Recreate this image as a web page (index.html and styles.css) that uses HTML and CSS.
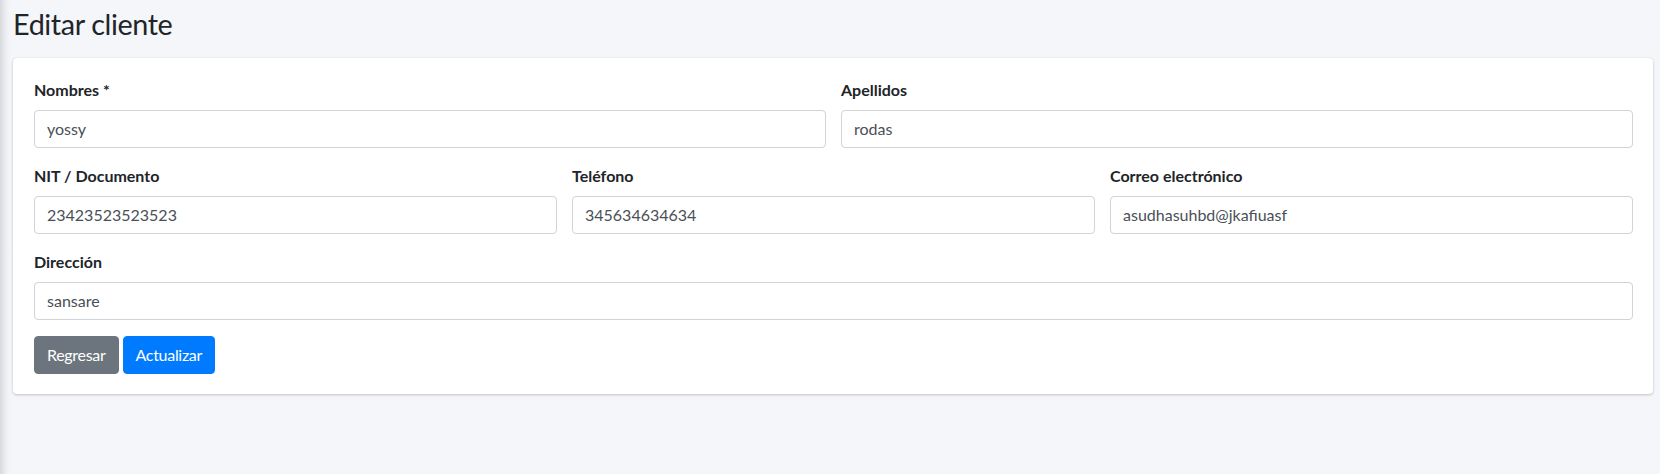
FILE: index.html
```html
<!DOCTYPE html>
<html lang="es">
<head>
<meta charset="utf-8">
<title>Editar cliente</title>
<link rel="stylesheet" href="styles.css">
</head>
<body>
<div class="page">
  <header class="content-header">
    <h1>Editar cliente</h1>
  </header>
  <section class="card">
    <form class="card-body">
      <div class="row two">
        <div class="form-group">
          <label>Nombres *</label>
          <input class="form-control" type="text" value="yossy">
        </div>
        <div class="form-group">
          <label>Apellidos</label>
          <input class="form-control" type="text" value="rodas">
        </div>
      </div>
      <div class="row three">
        <div class="form-group">
          <label>NIT / Documento</label>
          <input class="form-control" type="text" value="23423523523523">
        </div>
        <div class="form-group">
          <label>Teléfono</label>
          <input class="form-control" type="text" value="345634634634">
        </div>
        <div class="form-group">
          <label>Correo electrónico</label>
          <input class="form-control" type="text" value="asudhasuhbd@jkafiuasf">
        </div>
      </div>
      <div class="form-group">
        <label>Dirección</label>
        <input class="form-control" type="text" value="sansare">
      </div>
      <div class="actions">
        <button type="button" class="btn btn-secondary">Regresar</button>
        <button type="button" class="btn btn-primary">Actualizar</button>
      </div>
    </form>
  </section>
</div>
</body>
</html>
```

FILE: styles.css
```css
* { box-sizing: border-box; }
html, body {
  margin: 0;
  height: 100%;
}
body {
  font-family: Lato, "Noto Sans", sans-serif;
  font-size: 16px;
  line-height: 1.5;
  color: #212529;
  background: linear-gradient(to right, #d6d8dc 0px, #e6e8ec 4px, #f1f3f6 8px, #f4f6f9 12px);
}
.page {
  padding: 0 7px 0 13px;
}
.content-header {
  padding: 7px 0 16px 0;
}
.content-header h1 {
  margin: 0;
  font-size: 28.8px;
  font-weight: 400;
  line-height: 1.2;
  letter-spacing: -0.4px;
  color: #212529;
}
.card {
  background: #fff;
  border-radius: 4px;
  box-shadow: 0 0 1px rgba(0,0,0,.125), 0 1px 3px rgba(0,0,0,.2);
}
.card-body {
  padding: 20px 20px 20px 21px;
  display: flex;
  flex-direction: column;
}
.row {
  display: grid;
  column-gap: 15px;
}
.row.two { grid-template-columns: 1fr 1fr; }
.row.three { grid-template-columns: 1fr 1fr 1fr; }
.form-group {
  margin-bottom: 16px;
  display: flex;
  flex-direction: column;
}
.form-group label {
  font-weight: 700;
  margin-bottom: 8px;
  line-height: 24px;
}
.form-control {
  height: 38px;
  padding: 6px 12px;
  font-family: inherit;
  font-size: 16px;
  color: #495057;
  background: #fff;
  border: 1px solid #ced4da;
  border-radius: 4px;
  width: 100%;
  outline: none;
}
.actions {
  display: flex;
  gap: 4px;
}
.btn {
  font-family: inherit;
  font-size: 16px;
  line-height: 24px;
  letter-spacing: -0.3px;
  padding: 6px 12px;
  border: 1px solid transparent;
  border-radius: 4px;
  color: #fff;
  cursor: pointer;
}
.btn-secondary {
  background: #6c757d;
  border-color: #6c757d;
}
.btn-primary {
  background: #007bff;
  border-color: #007bff;
}
```
